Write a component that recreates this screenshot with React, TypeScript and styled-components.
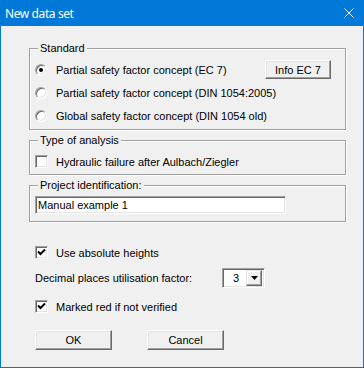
import styled, { createGlobalStyle } from "styled-components";

const GlobalStyle = createGlobalStyle`
  html, body { margin: 0; padding: 0; background: #f0f0f0; }
  * { box-sizing: border-box; }
`;

const Window = styled.div`
  width: 364px;
  height: 368px;
  border: 1px solid #0078d7;
  border-top: none;
  background: #f0f0f0;
  display: flex;
  flex-direction: column;
  font-family: "Liberation Sans", Arial, sans-serif;
  font-size: 11px;
  color: #000;
`;

const TitleBar = styled.div`
  height: 26px;
  flex: 0 0 26px;
  background: #0078d7;
  color: #fff;
  display: flex;
  align-items: center;
  padding: 0 9px 0 4px;
  font-family: "Noto Sans", "Open Sans", sans-serif;
  font-size: 12px;
  letter-spacing: -0.4px;
`;

const CloseIcon = styled.svg`
  margin-left: auto;
  width: 10px;
  height: 10px;
`;

const Body = styled.div`
  padding: 22px 17px 0 28px;
  display: flex;
  flex-direction: column;
`;

const Group = styled.div<{ $pad: string }>`
  position: relative;
  border: 1px solid #a0a0a0;
  box-shadow: inset 1px 1px 0 #fff, 1px 1px 0 #fff;
  padding: ${(p) => p.$pad};
  & + & { margin-top: 10px; }
`;

const Legend = styled.span`
  position: absolute;
  top: -7px;
  left: 8px;
  padding: 0 2px;
  line-height: 13px;
  background: #f0f0f0;
`;

const OptionRow = styled.div`
  height: 23px;
  display: flex;
  align-items: center;
`;

const Radio = styled.span<{ $checked?: boolean }>`
  width: 12px;
  height: 12px;
  flex: 0 0 12px;
  border-radius: 50%;
  border: 1px solid;
  border-color: #a0a0a0 #fff #fff #a0a0a0;
  box-shadow: inset 1px 1px 0 #696969, inset -1px -1px 0 #e3e3e3;
  background: #fff;
  display: flex;
  align-items: center;
  justify-content: center;
  &::after {
    content: "";
    width: 4px;
    height: 4px;
    border-radius: 50%;
    background: ${(p) => (p.$checked ? "#000" : "transparent")};
  }
`;

const Box = styled.span`
  width: 13px;
  height: 13px;
  flex: 0 0 13px;
  border: 1px solid;
  border-color: #a0a0a0 #fff #fff #a0a0a0;
  box-shadow: inset 1px 1px 0 #696969, inset -1px -1px 0 #e3e3e3;
  background: #fff;
  display: flex;
  align-items: center;
  justify-content: center;
`;

const Label = styled.span<{ $gap: number }>`
  margin-left: ${(p) => p.$gap}px;
  white-space: nowrap;
`;

const Button = styled.button<{ $w: number; $h: number }>`
  width: ${(p) => p.$w}px;
  height: ${(p) => p.$h}px;
  padding: 0;
  margin: 0;
  border: 1px solid;
  border-color: #fff #696969 #696969 #fff;
  box-shadow: inset -1px -1px 0 #a0a0a0, inset 1px 1px 0 #e3e3e3;
  background: #f0f0f0;
  font-family: "Liberation Sans", Arial, sans-serif;
  font-size: 11px;
  color: #000;
`;

const InfoButton = styled(Button)`
  margin-left: auto;
`;

const TextField = styled.div`
  width: 251px;
  height: 18px;
  border: 1px solid;
  border-color: #a0a0a0 #fff #fff #a0a0a0;
  box-shadow: inset 1px 1px 0 #696969, inset -1px -1px 0 #e3e3e3;
  background: #fff;
  display: flex;
  align-items: center;
  padding-left: 2px;
`;

const Options = styled.div`
  margin-top: 24px;
  padding-left: 6px;
  display: flex;
  flex-direction: column;
`;

const CheckRow = styled.div<{ $top: number }>`
  height: 13px;
  margin-top: ${(p) => p.$top}px;
  display: flex;
  align-items: center;
`;

const SelectRow = styled.div`
  height: 20px;
  margin-top: 9px;
  display: flex;
  align-items: center;
`;

const SelectLabel = styled.span`
  flex: 0 0 187px;
  white-space: nowrap;
`;

const Combo = styled.div`
  width: 43px;
  height: 20px;
  border: 1px solid;
  border-color: #a0a0a0 #fff #fff #a0a0a0;
  box-shadow: inset 1px 1px 0 #696969, inset -1px -1px 0 #e3e3e3;
  background: #fff;
  display: flex;
  align-items: center;
  padding: 1px 2px 1px 1px;
`;

const ComboValue = styled.span`
  flex: 1;
  padding-left: 9px;
`;

const ComboArrow = styled.span`
  width: 16px;
  height: 16px;
  border: 1px solid;
  border-color: #e3e3e3 #696969 #696969 #e3e3e3;
  box-shadow: inset -1px -1px 0 #a0a0a0, inset 1px 1px 0 #fff;
  background: #f0f0f0;
  display: flex;
  align-items: center;
  justify-content: center;
`;

const ButtonRow = styled.div`
  margin-top: 17px;
  display: flex;
  gap: 35px;
`;

function Check() {
  return (
    <svg width="9" height="9" viewBox="0 0 9 9">
      <path d="M1 3.5 L3.5 6 L8 1.5" fill="none" stroke="#000" strokeWidth="2" />
    </svg>
  );
}

const standards = [
  "Partial safety factor concept (EC 7)",
  "Partial safety factor concept (DIN 1054:2005)",
  "Global safety factor concept (DIN 1054 old)",
];

export default function App() {
  return (
    <>
      <GlobalStyle />
      <Window>
        <TitleBar>
          <span>New data set</span>
          <CloseIcon viewBox="0 0 10 10">
            <path d="M0.5 0.5 L9.5 9.5 M9.5 0.5 L0.5 9.5" stroke="#fff" strokeWidth="1" />
          </CloseIcon>
        </TitleBar>
        <Body>
          <Group $pad="9px 14px 2px 5px">
            <Legend>Standard</Legend>
            {standards.map((s, i) => (
              <OptionRow key={s}>
                <Radio $checked={i === 0} />
                <Label $gap={9}>{s}</Label>
                {i === 0 && (
                  <InfoButton $w={66} $h={19}>
                    Info EC 7
                  </InfoButton>
                )}
              </OptionRow>
            ))}
          </Group>
          <Group $pad="14px 5px 6px 5px">
            <Legend>Type of analysis</Legend>
            <CheckRow $top={0}>
              <Box />
              <Label $gap={8}>Hydraulic failure after Aulbach/Ziegler</Label>
            </CheckRow>
          </Group>
          <Group $pad="10px 5px 7px 5px">
            <Legend>Project identification:</Legend>
            <TextField>Manual example 1</TextField>
          </Group>
          <Options>
            <CheckRow $top={0}>
              <Box>
                <Check />
              </Box>
              <Label $gap={8}>Use absolute heights</Label>
            </CheckRow>
            <SelectRow>
              <SelectLabel>Decimal places utilisation factor:</SelectLabel>
              <Combo>
                <ComboValue>3</ComboValue>
                <ComboArrow>
                  <svg width="7" height="4" viewBox="0 0 7 4">
                    <polygon points="0,0 7,0 3.5,4" fill="#000" />
                  </svg>
                </ComboArrow>
              </Combo>
            </SelectRow>
            <CheckRow $top={12}>
              <Box>
                <Check />
              </Box>
              <Label $gap={8}>Marked red if not verified</Label>
            </CheckRow>
            <ButtonRow>
              <Button $w={77} $h={20}>OK</Button>
              <Button $w={77} $h={20}>Cancel</Button>
            </ButtonRow>
          </Options>
        </Body>
      </Window>
    </>
  );
}
